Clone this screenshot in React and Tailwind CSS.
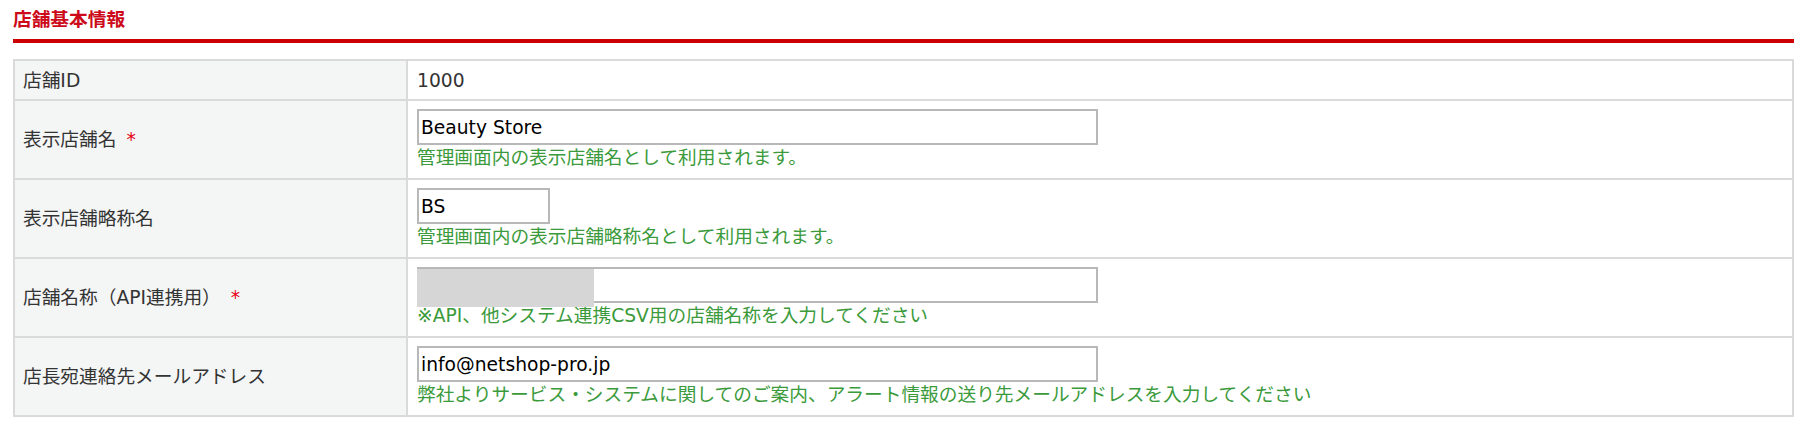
import { useState } from 'react'

/* 店舗基本情報: basic shop settings block. Label column on the left, fields with
   green helper notes on the right. */
const FONT = "font-['DejaVu_Sans','Noto_Sans_CJK_JP',sans-serif]"

function Req() {
  return <span className="ml-[10px] text-[#e60012]">*</span>
}

function Field({ value, onChange, width = 'w-[681px]', masked = false }) {
  return (
    <div className="relative w-fit">
      <input
        type="text"
        value={value}
        onChange={(e) => onChange(e.target.value)}
        className={`${width} ${FONT} block h-[36px] border-2 border-[#b8b8b8] bg-white px-[2px] text-[18.7px] text-black outline-none`}
      />
      {masked && <div className="absolute left-0 top-[2px] h-[38px] w-[177px] bg-[#d6d6d6]" />}
    </div>
  )
}

function Note({ children }) {
  return <p className="leading-[25px] text-[#3b9a3b]">{children}</p>
}

function Row({ label, children, tall = true }) {
  return (
    <tr>
      <th className={`w-[393px] border-2 border-[#dadada] bg-[#f4f5f5] pl-[8px] text-left align-middle font-normal ${tall ? '' : 'h-[40px]'}`}>
        {label}
      </th>
      <td className={`border-2 border-[#dadada] pl-[9px] align-middle ${tall ? 'pb-[8px] pt-[8px]' : 'h-[40px]'}`}>
        {children}
      </td>
    </tr>
  )
}

export default function App() {
  const [name, setName] = useState('Beauty Store')
  const [short, setShort] = useState('BS')
  const [apiName, setApiName] = useState('')
  const [mail, setMail] = useState('info@netshop-pro.jp')

  return (
    <div className={`${FONT} min-h-[422px] bg-white pl-[13px] pr-[11px] pt-[8px] text-[18.7px] leading-[25px] text-[#333]`}>
      <h2 className="font-bold leading-[24px] text-[#cc0a1a]">店舗基本情報</h2>
      <div className="mt-[7px] h-[4px] bg-[#cc0000]" />
      <table className="mt-[16px] w-full border-collapse">
        <tbody>
          <Row label="店舗ID" tall={false}>1000</Row>
          <Row label={<>表示店舗名<Req /></>}>
            <Field value={name} onChange={setName} />
            <Note>管理画面内の表示店舗名として利用されます。</Note>
          </Row>
          <Row label="表示店舗略称名">
            <Field value={short} onChange={setShort} width="w-[133px]" />
            <Note>管理画面内の表示店舗略称名として利用されます。</Note>
          </Row>
          <Row label={<>店舗名称（API連携用）<Req /></>}>
            <Field value={apiName} onChange={setApiName} masked />
            <Note>※API、他システム連携CSV用の店舗名称を入力してください</Note>
          </Row>
          <Row label="店長宛連絡先メールアドレス">
            <Field value={mail} onChange={setMail} />
            <Note>弊社よりサービス・システムに関してのご案内、アラート情報の送り先メールアドレスを入力してください</Note>
          </Row>
        </tbody>
      </table>
    </div>
  )
}
